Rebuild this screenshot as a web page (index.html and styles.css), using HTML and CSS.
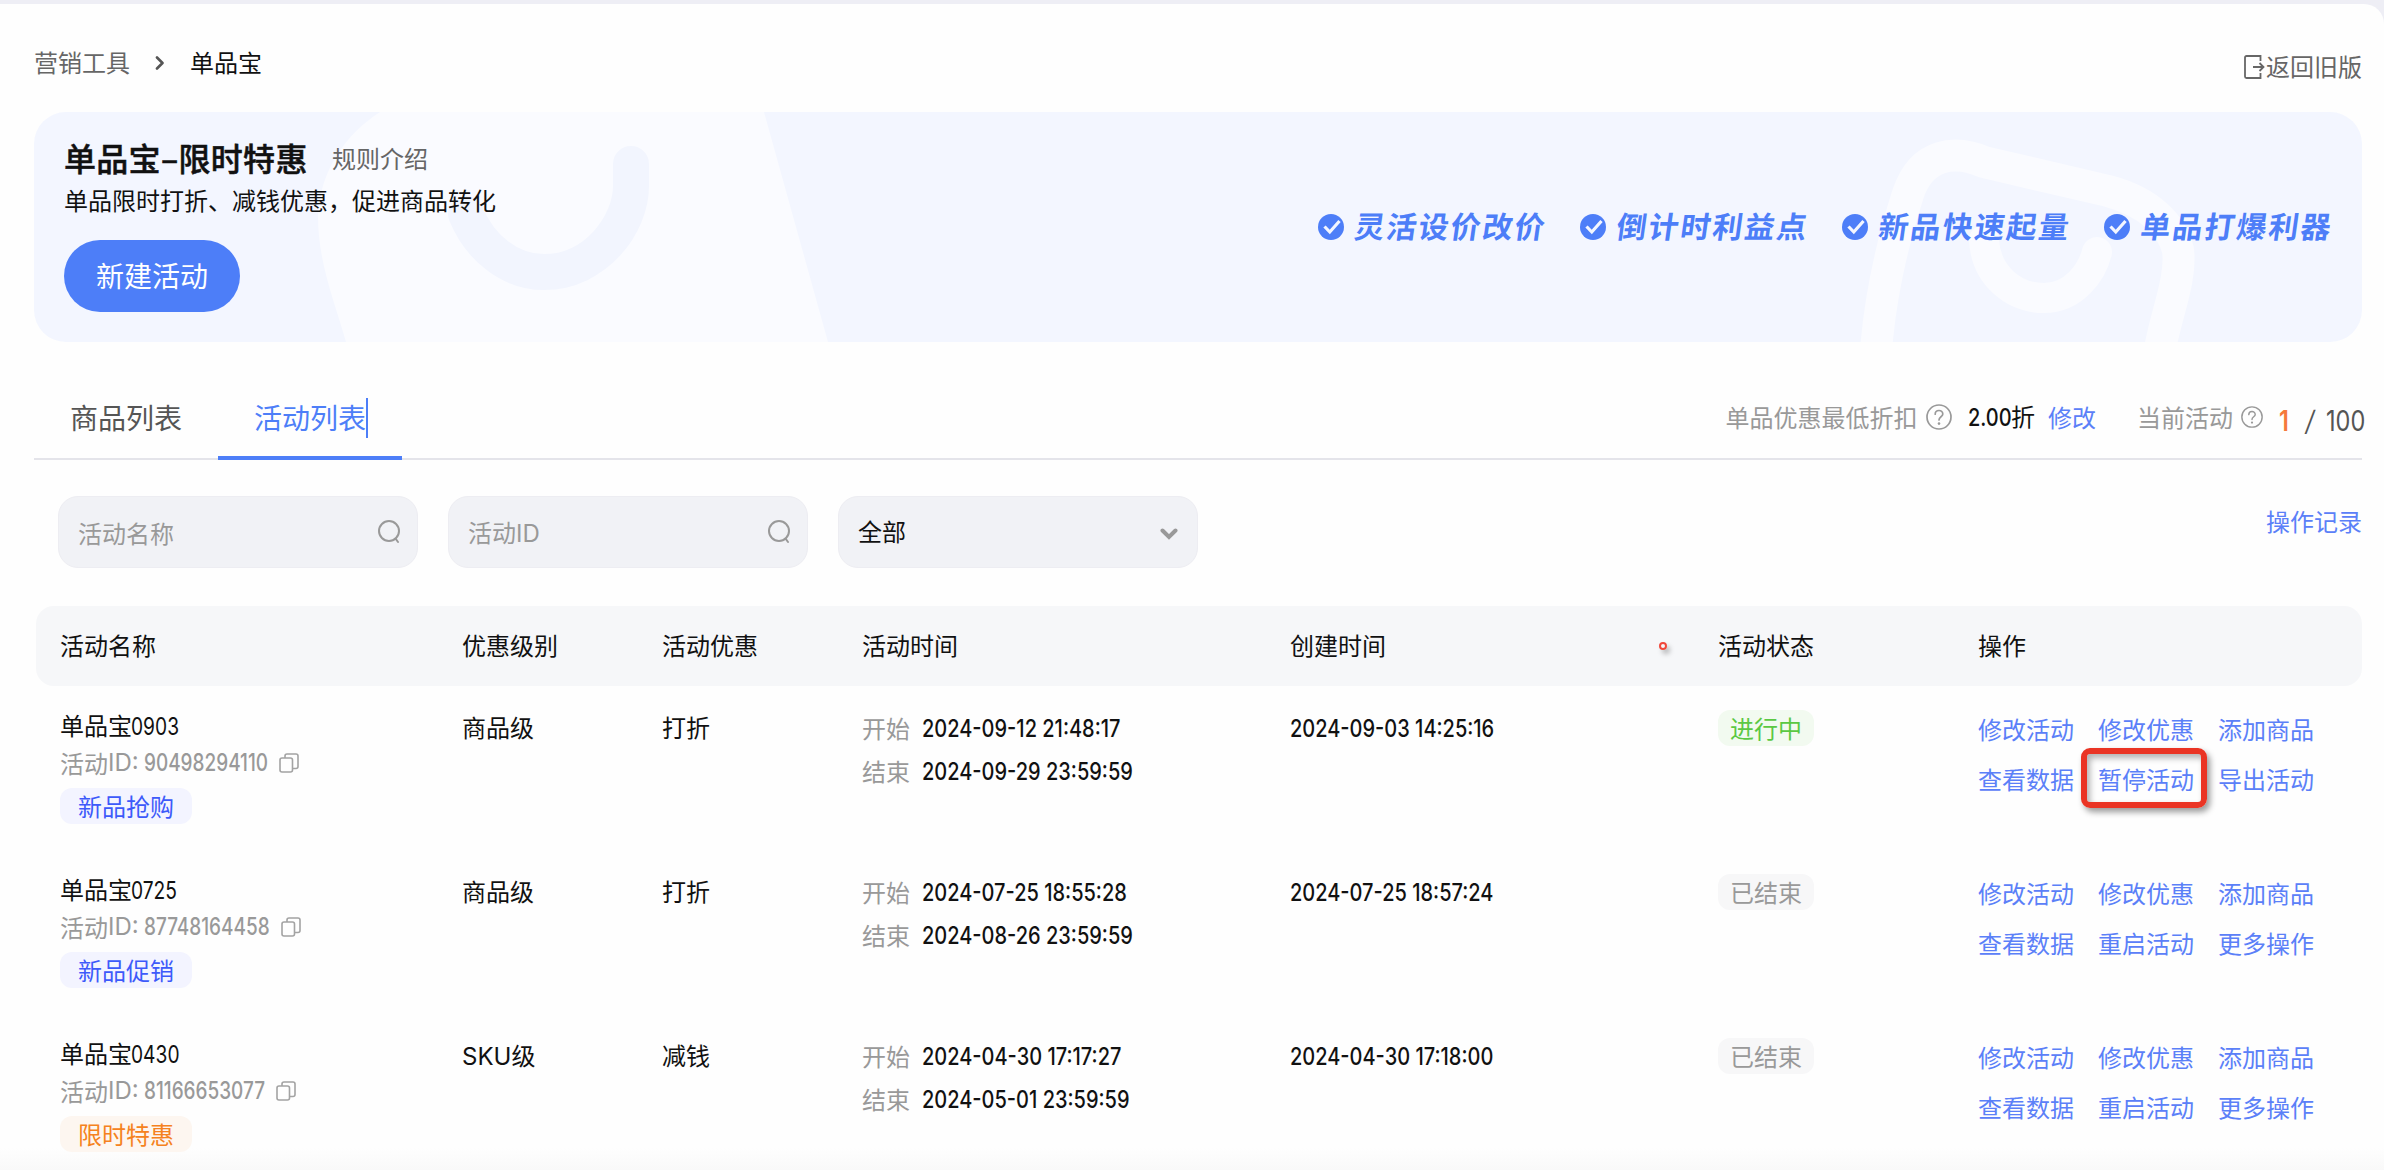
FILE: index.html
```html
<!DOCTYPE html>
<html lang="zh-CN">
<head>
    <meta charset="UTF-8">
    <meta name="viewport" content="width=device-width, initial-scale=1.0">
    <title>单品宝</title>

    <!-- css styling -->
    <link rel="stylesheet" href="styles.css">
</head>
<body>
<!-- shared icons -->
<svg class="sprite">
    <symbol id="check" viewBox="0 0 26 26">
        <circle cx="13" cy="13" r="13" fill="#4d7ef8"/>
        <path d="M6.5 12.5l5.3 5.5L21.5 7" fill="none" stroke="#f3f6ff" stroke-width="3.2"/>
    </symbol>
    <symbol id="help" viewBox="0 0 26 26">
        <g fill="none" stroke="#999" stroke-width="1.7" stroke-linecap="round">
            <circle cx="13" cy="13" r="12"/>
            <path d="M9.2 10.2C9.2 5.3 16.8 5.3 16.8 10C16.8 12.8 13 12.8 13 16"/>
        </g>
        <circle cx="13" cy="19.6" r="1.3" fill="#999"/>
    </symbol>
    <symbol id="search" viewBox="0 0 24 26">
        <g fill="none" stroke="#999" stroke-width="2" stroke-linecap="round">
            <circle cx="12" cy="12" r="10"/>
            <path d="M18.5 19.5L21 23"/>
        </g>
    </symbol>
    <symbol id="copy" viewBox="0 0 20 20">
        <g fill="none" stroke="#a3a3a3" stroke-width="1.6">
            <rect x="1" y="5" width="12.5" height="14" rx="2"/>
            <path d="M6 5V3a2 2 0 0 1 2-2h9a2 2 0 0 1 2 2v10.500a2 2 0 0 1-2 2h-3.500"/>
        </g>
    </symbol>
</svg>

<div class="page">
    <!-- breadcrumb -->
    <div class="topbar">
        <div class="crumbs">
            <span>营销工具</span>
            <svg class="crumb-arrow" viewBox="0 0 10 14"><path d="M2 1.5L7.5 7L2 12.5" fill="none" stroke="#555" stroke-width="2.6" stroke-linecap="round" stroke-linejoin="round"/></svg>
            <span class="current">单品宝</span>
        </div>
        <a class="old-version">
            <svg class="exit-icon" viewBox="0 0 22 24"><path d="M16.500 6V1H2.500A1.500 1.500 0 0 0 1 2.500v19A1.500 1.500 0 0 0 2.500 23H16.500v-5M9 12h10.500M15.500 8l4 4l-4 4" fill="none" stroke="#666" stroke-width="1.8"/></svg>返回旧版
        </a>
    </div>

    <!-- banner -->
    <div class="banner">
        <svg class="banner-art" viewBox="34 112 2328 230">
            <path d="M380 112H764L828 342H346C334 300 318 262 318 216C320 170 346 134 380 112Z" fill="#fafbff"/>
            <path d="M466 214C480 248 510 272 544 272C596 272 631 224 631 186V164" fill="none" stroke="#f2f5fe" stroke-width="36" stroke-linecap="round"/>
            <path d="M1876 350C1880 300 1890 250 1908 194C1922 152 1956 150 1984 162L2108 191C2150 202 2172 226 2178 250C2182 280 2164 320 2160 350" fill="none" stroke="#fafbff" stroke-width="32"/>
            <path d="M1984 240C1986 276 2014 298 2044 298C2074 298 2092 272 2097 252" fill="none" stroke="#fafbff" stroke-width="30" stroke-linecap="round"/>
        </svg>
        <div class="banner-left">
            <div class="banner-title">
                <h1>单品宝–限时特惠</h1>
                <a>规则介绍</a>
            </div>
            <p>单品限时打折、减钱优惠，促进商品转化</p>
            <button class="create-btn">新建活动</button>
        </div>
        <ul class="features">
            <li><svg><use href="#check"/></svg><span>灵活设价改价</span></li>
            <li><svg><use href="#check"/></svg><span>倒计时利益点</span></li>
            <li><svg><use href="#check"/></svg><span>新品快速起量</span></li>
            <li><svg><use href="#check"/></svg><span>单品打爆利器</span></li>
        </ul>
    </div>

    <!-- tabs -->
    <div class="tabs">
        <div class="tab">商品列表</div>
        <div class="tab active">活动列表</div>
        <div class="quota">
            <span>单品优惠最低折扣</span>
            <svg class="help-big"><use href="#help"/></svg>
            <span class="discount"><b class="num">2.00</b>折</span>
            <a>修改</a>
            <span class="running">当前活动</span>
            <svg class="help-small"><use href="#help"/></svg>
            <span class="used num">1</span>
            <span class="total num"><span class="slash">/</span> 100</span>
        </div>
    </div>

    <!-- filters -->
    <div class="filters">
        <div class="field"><span>活动名称</span><svg class="search-icon"><use href="#search"/></svg></div>
        <div class="field"><span>活动<span class="en">ID</span></span><svg class="search-icon"><use href="#search"/></svg></div>
        <div class="field select">
            <span>全部</span>
            <svg class="caret" viewBox="0 0 18 12"><path d="M2.5 2.5L9 9L15.5 2.5" fill="none" stroke="#999" stroke-width="4" stroke-linecap="round"/></svg>
        </div>
        <a class="log">操作记录</a>
    </div>

    <!-- table -->
    <div class="table">
        <div class="row head">
            <div>活动名称</div>
            <div>优惠级别</div>
            <div>活动优惠</div>
            <div>活动时间</div>
            <div>创建时间<i class="red-dot"></i></div>
            <div>活动状态</div>
            <div>操作</div>
        </div>

        <div class="row">
            <div class="name">
                <div class="name-title">单品宝<span class="num">0903</span></div>
                <div class="name-id">活动<span class="en">ID: </span><span class="num">90498294110</span><svg><use href="#copy"/></svg></div>
                <span class="tag">新品抢购</span>
            </div>
            <div class="cell">商品级</div>
            <div class="cell">打折</div>
            <div class="time">
                <div><span>开始</span><b class="num">2024-09-12 21:48:17</b></div>
                <div><span>结束</span><b class="num">2024-09-29 23:59:59</b></div>
            </div>
            <div class="cell"><b class="num">2024-09-03 14:25:16</b></div>
            <div><span class="status on">进行中</span></div>
            <div class="ops">
                <a>修改活动</a><a>修改优惠</a><a>添加商品</a>
                <a>查看数据</a><a class="marked">暂停活动</a><a>导出活动</a>
            </div>
        </div>

        <div class="row">
            <div class="name">
                <div class="name-title">单品宝<span class="num">0725</span></div>
                <div class="name-id">活动<span class="en">ID: </span><span class="num">87748164458</span><svg><use href="#copy"/></svg></div>
                <span class="tag">新品促销</span>
            </div>
            <div class="cell">商品级</div>
            <div class="cell">打折</div>
            <div class="time">
                <div><span>开始</span><b class="num">2024-07-25 18:55:28</b></div>
                <div><span>结束</span><b class="num">2024-08-26 23:59:59</b></div>
            </div>
            <div class="cell"><b class="num">2024-07-25 18:57:24</b></div>
            <div><span class="status">已结束</span></div>
            <div class="ops">
                <a>修改活动</a><a>修改优惠</a><a>添加商品</a>
                <a>查看数据</a><a>重启活动</a><a>更多操作</a>
            </div>
        </div>

        <div class="row">
            <div class="name">
                <div class="name-title">单品宝<span class="num">0430</span></div>
                <div class="name-id">活动<span class="en">ID: </span><span class="num">81166653077</span><svg><use href="#copy"/></svg></div>
                <span class="tag orange">限时特惠</span>
            </div>
            <div class="cell"><span class="en">SKU</span>级</div>
            <div class="cell">减钱</div>
            <div class="time">
                <div><span>开始</span><b class="num">2024-04-30 17:17:27</b></div>
                <div><span>结束</span><b class="num">2024-05-01 23:59:59</b></div>
            </div>
            <div class="cell"><b class="num">2024-04-30 17:18:00</b></div>
            <div><span class="status">已结束</span></div>
            <div class="ops">
                <a>修改活动</a><a>修改优惠</a><a>添加商品</a>
                <a>查看数据</a><a>重启活动</a><a>更多操作</a>
            </div>
        </div>
    </div>
</div>
</body>
</html>
```
FILE: styles.css
```css
*, *::after{
    box-sizing: border-box;
}

body{
    margin: 0;
    padding-top: 4px;
    height: 1170px;
    overflow: hidden;
    background: #eeeef5;
    color: #111;
    font: 24px/36px "Noto Sans CJK SC", sans-serif;
}

.sprite{
    display: none;
}

.page{
    height: 1166px;
    padding: 0 22px 0 34px;
    background: linear-gradient(#fefefe 1144px, #f9f9f9);
    border-top-right-radius: 20px;
}

.en{
    font-family: Inter, sans-serif;
}

/* narrow digits */
.num{
    display: inline-block;
    transform: scaleX(.833);
    transform-origin: left;
    font-family: Inter, sans-serif;
    font-weight: 500;
    white-space: nowrap;
}

/* TOP BAR */
.topbar{
    display: flex;
    justify-content: space-between;
    height: 108px;
    padding-top: 40px;
    color: #666;
}

.crumbs{
    display: flex;
    align-items: center;
    height: 36px;
}

.crumb-arrow{
    width: 10px;
    height: 14px;
    margin: 2px 25px 0 25px;
}

.current{
    color: #111;
}

.old-version{
    display: flex;
    align-items: center;
    height: 36px;
    margin-top: 4px;
}

.exit-icon{
    width: 22px;
    height: 24px;
    margin-top: 2px;
}

/* BANNER */
.banner{
    position: relative;
    display: flex;
    justify-content: space-between;
    height: 230px;
    padding: 24px 30px 0;
    background: #f3f6ff;
    border-radius: 32px;
    overflow: hidden;
}

.banner-art{
    position: absolute;
    left: 0;
    top: 0;
    width: 2328px;
    height: 230px;
}

.banner-left{
    position: relative;
}

.banner-title{
    display: flex;
    align-items: center;
    gap: 25px;
    height: 42px;
}

.banner-title h1{
    margin: 0;
    width: 243px;
    font-size: 32px;
    font-weight: 500;
    letter-spacing: .3px;
    white-space: nowrap;
    -webkit-text-stroke: .5px #111;
}

.banner-title a{
    color: #666;
    padding-top: 1px;
}

.banner-left p{
    margin: 4px 0 22px;
}

.create-btn{
    display: block;
    width: 176px;
    height: 72px;
    padding: 0 0 2px;
    border: 0;
    border-radius: 36px;
    background: #4d7ef8;
    color: #fff;
    font: inherit;
    font-size: 28px;
}

.features{
    position: relative;
    display: flex;
    gap: 34px;
    height: 40px;
    margin: 71px 0 0;
    padding: 0;
    list-style: none;
}

.features li{
    display: flex;
    align-items: center;
    gap: 10px;
    color: #4d7ef8;
    font-size: 30px;
    font-weight: 700;
    letter-spacing: 2px;
}

.features svg{
    width: 26px;
    height: 26px;
}

.features span{
    width: 192px;
    margin-top: -5px;
    transform: skewX(-8deg);
    text-indent: 1px;
    white-space: nowrap;
}

/* TABS */
.tabs{
    display: flex;
    height: 88px;
    margin-top: 30px;
    border-bottom: 2px solid #e4e4ea;
}

.tab{
    height: 88px;
    padding: 0 36px;
    color: #555;
    font-size: 28px;
    line-height: 91px;
}

.tab.active{
    color: #4d7ef8;
    border-bottom: 4px solid #4d7ef8;
    position: relative;
}

/* text cursor */
.tab.active::after{
    content: "";
    position: absolute;
    left: 148px;
    top: 26px;
    width: 2px;
    height: 40px;
    background: #4d7ef8;
}

.quota{
    display: flex;
    align-items: center;
    height: 90px;
    margin-left: auto;
    color: #999;
}

.quota a, .log{
    color: #5b80f8;
}

.help-big{
    width: 26px;
    height: 26px;
    margin: 0 16px 0 8px;
}

.discount{
    color: #111;
    margin-right: 13px;
}

.discount .num{
    margin-right: -9px;
}

.running{
    margin-left: 41px;
}

.help-small{
    width: 22px;
    height: 22px;
    margin: 0 16px 0 8px;
}

.used{
    width: 27px;
    padding-top: 7px;
    color: #f5793b;
    font-size: 28px;
    font-weight: 600;
}

.total{
    width: 56px;
    padding-top: 7px;
    color: #555;
    font-size: 28px;
    font-weight: 400;
    transform: scaleX(.84);
}

.slash{
    display: inline-block;
    width: 14px;
    transform: skewX(-10deg);
    margin-right: 2px;
}

/* FILTERS */
.filters{
    display: flex;
    gap: 30px;
    height: 110px;
    margin-top: 36px;
    padding-left: 24px;
}

.field{
    display: flex;
    align-items: center;
    justify-content: space-between;
    width: 360px;
    height: 72px;
    padding: 1px 16px 0 19px;
    border: 1px solid #ededf2;
    border-radius: 20px;
    background: #f1f2f6;
    color: #999;
}

.field.select{
    padding: 0 19px 2px 19px;
    color: #111;
}

.search-icon{
    width: 24px;
    height: 26px;
    margin-top: -2px;
}

.caret{
    width: 18px;
    height: 12px;
    margin-top: 6px;
}

.log{
    margin: 7px 0 0 auto;
}

/* TABLE */
.row{
    display: grid;
    grid-template-columns: 402px 200px 200px 428px 428px 260px 384px;
    height: 164px;
    margin-left: 2px;
    padding-left: 24px;
}

.row.head{
    height: 80px;
    align-items: center;
    border-radius: 18px;
    background: #f6f7f9;
}

.row.head > div{
    position: relative;
    top: -1px;
}

/* little red ring left on the header */
.red-dot{
    position: absolute;
    left: 369px;
    top: 15px;
    width: 8px;
    height: 8px;
    border: 2px solid #f0473a;
    border-radius: 50%;
    box-shadow: 3px 4px 5px rgba(0,0,0,.25);
}

.name{
    padding-top: 21px;
}

.name-title{
    height: 36px;
}

.name-id{
    display: flex;
    align-items: center;
    height: 36px;
    margin-top: 2px;
    color: #999;
    white-space: pre;
}

.name-title .num{
    margin-left: -1px;
    font-weight: 400;
    transform: scaleX(.8);
}

.name-id .num{
    margin: 0 -22px 0 -1px;
    transform: scaleX(.79);
}

.name-id svg{
    width: 20px;
    height: 20px;
}

.tag{
    display: block;
    width: 132px;
    height: 36px;
    margin-top: 7px;
    border-radius: 12px;
    background: #f3f4ff;
    color: #3d5afa;
    line-height: 35px;
    text-align: center;
}

.tag.orange{
    background: #fdf6f0;
    color: #f58220;
}

.cell{
    padding-top: 23px;
}

.time{
    padding-top: 21px;
}

.time div{
    display: flex;
    gap: 12px;
    line-height: 42px;
}

.time .num{
    padding-top: 1px;
}

.time span{
    color: #999;
}

.status{
    display: block;
    width: 96px;
    height: 36px;
    margin-top: 24px;
    border-radius: 12px;
    background: #f7f7f8;
    color: #999;
    line-height: 35px;
    text-align: center;
}

.status.on{
    background: #f2faf0;
    color: #5bc843;
}

.ops{
    display: grid;
    grid-template-columns: 120px 120px 120px;
    grid-template-rows: 50px 50px;
    padding-top: 18px;
    line-height: 50px;
    color: #5b80f8;
}

.marked{
    position: relative;
}

/* red highlight frame */
.marked::after{
    content: "";
    position: absolute;
    left: -17px;
    top: -6px;
    width: 126px;
    height: 60px;
    border: 6px solid #ea3424;
    border-radius: 9px;
    box-shadow: 3px 4px 6px rgba(0,0,0,.4), inset 3px 4px 6px rgba(0,0,0,.3);
}
```
